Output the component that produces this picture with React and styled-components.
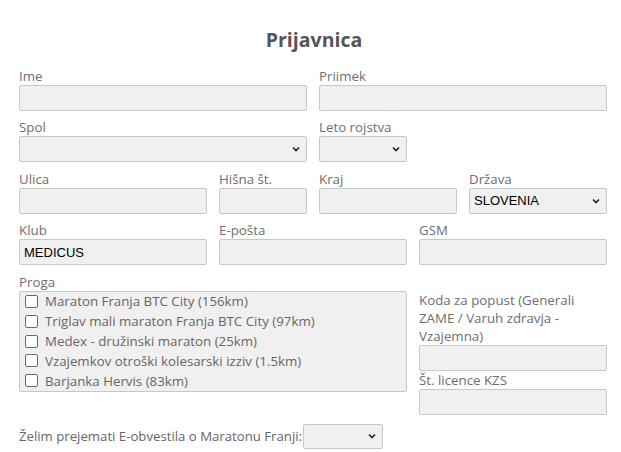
import styled, { createGlobalStyle } from "styled-components";

const GlobalStyle = createGlobalStyle`
  body {
    margin: 0;
    background: #fff;
    font-family: "Open Sans", "Noto Sans", sans-serif;
  }
`;

const Page = styled.div`
  width: 621px;
  padding: 27px 0 0 19px;
  box-sizing: border-box;
`;

const Title = styled.h1`
  margin: 0 0 14px;
  padding-right: 12px;
  text-align: center;
  font-size: 19.5px;
  line-height: 26px;
  font-weight: 700;
  color: #555;
`;

const Grid = styled.div`
  display: grid;
  grid-template-columns: repeat(12, 38px);
  column-gap: 12px;
  row-gap: 7.4px;
`;

const Field = styled.div`
  grid-column: span ${({ span }) => span};
  display: flex;
  flex-direction: column;
  padding-top: ${({ offset }) => offset || 0}px;
`;

const Label = styled.label`
  display: block;
  padding-top: ${({ lh }) => (lh ? 0 : 1)}px;
  font-size: 13.3px;
  line-height: ${({ lh }) => lh || 17}px;
  color: #6e6e6e;
  white-space: ${({ wrap }) => (wrap ? "normal" : "nowrap")};
`;

const Input = styled.input`
  box-sizing: border-box;
  width: 100%;
  height: 26px;
  margin: 0;
  padding: 0 4px;
  border: 1px solid #c8c8c8;
  border-radius: 2px;
  background: #f0f0f0;
  font-family: "Liberation Sans", Arial, sans-serif;
  font-size: 13px;
  color: #000;
`;

const SelectWrap = styled.div`
  position: relative;
  width: ${({ w }) => (w ? `${w}px` : "100%")};
  height: ${({ h }) => h || 26}px;
`;

const Select = styled.div`
  box-sizing: border-box;
  width: 100%;
  height: 100%;
  display: flex;
  align-items: center;
  padding: 0 4px;
  border: 1px solid #c8c8c8;
  border-radius: 2px;
  background: #f0f0f0;
  font-family: "Liberation Sans", Arial, sans-serif;
  font-size: 13px;
  color: #000;
`;

const Chevron = styled.svg`
  position: absolute;
  right: 7px;
  top: 50%;
  margin-top: -3px;
  width: 8px;
  height: 6px;
`;

const ListBox = styled.div`
  box-sizing: border-box;
  border: 1px solid #c8c8c8;
  border-radius: 2px;
  background: #f0f0f0;
  padding: 0 0 0 5px;
`;

const Option = styled.label`
  display: flex;
  align-items: center;
  gap: 7px;
  height: 19.8px;
  font-size: 13.3px;
  color: #666;
  white-space: nowrap;
`;

const Box = styled.span`
  box-sizing: border-box;
  width: 13px;
  height: 13px;
  border: 1px solid #6a6a6a;
  border-radius: 2px;
  background: #fff;
`;

const Bottom = styled.div`
  display: flex;
  align-items: center;
  gap: 1px;
  margin-top: 9px;
`;

const Text = styled.span`
  font-size: 13.2px;
  color: #666;
`;

function Dropdown({ value, w, h }) {
  return (
    <SelectWrap w={w} h={h}>
      <Select>{value}</Select>
      <Chevron viewBox="0 0 8 6">
        <path d="M1 1.5 L4 4.5 L7 1.5" fill="none" stroke="#222" strokeWidth="1.6" />
      </Chevron>
    </SelectWrap>
  );
}

const proge = [
  "Maraton Franja BTC City (156km)",
  "Triglav mali maraton Franja BTC City (97km)",
  "Medex - družinski maraton (25km)",
  "Vzajemkov otroški kolesarski izziv (1.5km)",
  "Barjanka Hervis (83km)",
];

export default function App() {
  return (
    <Page>
      <GlobalStyle />
      <Title>Prijavnica</Title>
      <Grid>
        <Field span={6}>
          <Label>Ime</Label>
          <Input />
        </Field>
        <Field span={6}>
          <Label>Priimek</Label>
          <Input />
        </Field>

        <Field span={6}>
          <Label>Spol</Label>
          <Dropdown />
        </Field>
        <Field span={2}>
          <Label>Leto rojstva</Label>
          <Dropdown />
        </Field>
        <Field span={4} />

        <Field span={4}>
          <Label>Ulica</Label>
          <Input />
        </Field>
        <Field span={2}>
          <Label>Hišna št.</Label>
          <Input />
        </Field>
        <Field span={3}>
          <Label>Kraj</Label>
          <Input />
        </Field>
        <Field span={3}>
          <Label>Država</Label>
          <Dropdown value="SLOVENIA" />
        </Field>

        <Field span={4}>
          <Label>Klub</Label>
          <Input defaultValue="MEDICUS" />
        </Field>
        <Field span={4}>
          <Label>E-pošta</Label>
          <Input />
        </Field>
        <Field span={4}>
          <Label>GSM</Label>
          <Input />
        </Field>

        <Field span={8}>
          <Label>Proga</Label>
          <ListBox>
            {proge.map((p) => (
              <Option key={p}>
                <Box />
                {p}
              </Option>
            ))}
          </ListBox>
        </Field>
        <Field span={4} offset={18}>
          <Label wrap lh={18}>
            Koda za popust (Generali ZAME / Varuh zdravja - Vzajemna)
          </Label>
          <Input />
          <Label>Št. licence KZS</Label>
          <Input />
        </Field>
      </Grid>
      <Bottom>
        <Text>Želim prejemati E-obvestila o Maratonu Franji:</Text>
        <Dropdown w={80} h={25} />
      </Bottom>
    </Page>
  );
}
